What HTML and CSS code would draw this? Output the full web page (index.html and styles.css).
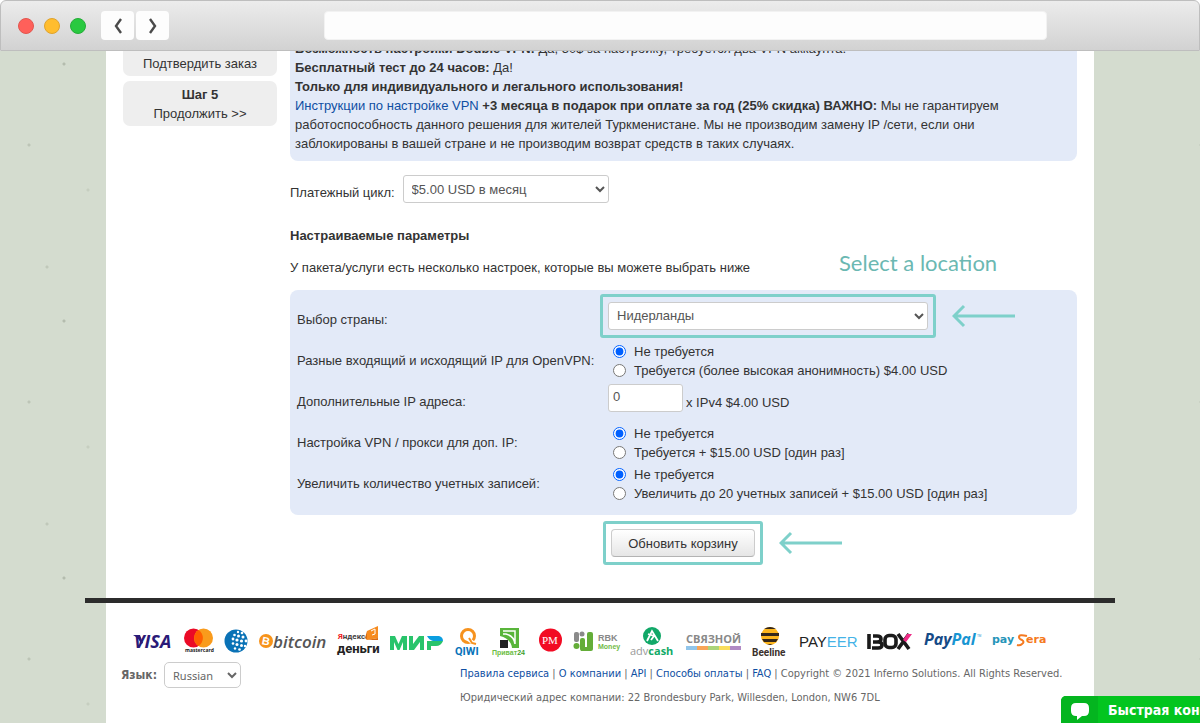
FILE: index.html
```html
<!DOCTYPE html>
<html lang="ru">
<head>
<meta charset="utf-8">
<title>Inferno Solutions</title>
<link rel="stylesheet" href="styles.css">
</head>
<body>
<header class="titlebar">
  <div class="lights"><span class="light red"></span><span class="light yellow"></span><span class="light green"></span></div>
  <div class="nav">
    <button type="button" class="nav-button" aria-label="Back"><svg width="10" height="16" viewBox="0 0 10 16"><path d="M8 1 3 8l5 7" fill="none" stroke="#4a4a4a" stroke-width="2.4"/></svg></button>
    <button type="button" class="nav-button" aria-label="Forward"><svg width="10" height="16" viewBox="0 0 10 16"><path d="m2 1 5 7-5 7" fill="none" stroke="#4a4a4a" stroke-width="2.4"/></svg></button>
  </div>
  <input class="address" type="text" aria-label="Address">
</header>
<div class="viewport">
  <div class="page">
    <div class="columns">
      <aside class="steps">
        <div class="step"><strong>Шаг 4</strong><span>Подтвердить заказ</span></div>
        <div class="step"><strong>Шаг 5</strong><span>Продолжить &gt;&gt;</span></div>
      </aside>
      <main class="main">
        <section class="panel description">
          <b>Возможность настройки Double VPN:</b> Да, 50$ за настройку, требуется два VPN аккаунта.<br>
          <b>Бесплатный тест до 24 часов:</b> Да!<br>
          <b>Только для индивидуального и легального использования!</b><br>
          <a href="#">Инструкции по настройке VPN</a> <b>+3 месяца в подарок при оплате за год (25% скидка) ВАЖНО:</b> Мы не гарантируем<br>
          работоспособность данного решения для жителей Туркменистане. Мы не производим замену IP /сети, если они<br>
          заблокированы в вашей стране и не производим возврат средств в таких случаях.
        </section>
        <div class="cycle">
          <label for="cycle">Платежный цикл:</label>
          <select id="cycle" class="control cycle-select"><option>$5.00 USD в месяц</option></select>
        </div>
        <h2 class="heading">Настраиваемые параметры</h2>
        <div class="intro">
          <p>У пакета/услуги есть несколько настроек, которые вы можете выбрать ниже</p>
          <span class="note">Select a location</span>
        </div>
        <section class="panel options">
          <div class="option">
            <label class="option-name" for="country">Выбор страны:</label>
            <div class="pointed country">
              <span class="frame"><select id="country" class="control country-select"><option>Нидерланды</option></select></span>
              <svg class="arrow" width="63" height="24" viewBox="0 0 63 24"><path d="M63 12H2M12 2 2 12l10 10" fill="none" stroke="#7ed0ca" stroke-width="3"/></svg>
            </div>
          </div>
          <div class="option" role="radiogroup" aria-labelledby="n1">
            <span class="option-name" id="n1">Разные входящий и исходящий IP для OpenVPN:</span>
            <div class="choices">
              <label class="choice"><input type="radio" name="a" checked>Не требуется</label>
              <label class="choice"><input type="radio" name="a">Требуется (более высокая анонимность) $4.00 USD</label>
            </div>
          </div>
          <div class="option">
            <label class="option-name" for="ips">Дополнительные IP адреса:</label>
            <div class="quantity"><input id="ips" class="control quantity-input" type="text" value="0"><span>x IPv4 $4.00 USD</span></div>
          </div>
          <div class="option" role="radiogroup" aria-labelledby="n2">
            <span class="option-name" id="n2">Настройка VPN / прокси для доп. IP:</span>
            <div class="choices">
              <label class="choice"><input type="radio" name="b" checked>Не требуется</label>
              <label class="choice"><input type="radio" name="b">Требуется + $15.00 USD [один раз]</label>
            </div>
          </div>
          <div class="option" role="radiogroup" aria-labelledby="n3">
            <span class="option-name" id="n3">Увеличить количество учетных записей:</span>
            <div class="choices">
              <label class="choice"><input type="radio" name="c" checked>Не требуется</label>
              <label class="choice"><input type="radio" name="c">Увеличить до 20 учетных записей + $15.00 USD [один раз]</label>
            </div>
          </div>
        </section>
        <div class="pointed submit">
          <span class="frame"><button type="submit" class="update">Обновить корзину</button></span>
          <svg class="arrow" width="63" height="24" viewBox="0 0 63 24"><path d="M63 12H2M12 2 2 12l10 10" fill="none" stroke="#7ed0ca" stroke-width="3"/></svg>
        </div>
      </main>
    </div>
    <hr class="rule">
    <footer class="footer">
      <div class="logos">
        <svg width="41" height="36"><path d="M1 11h7l3 8-2 1q-2-6-8-9" fill="#2a1a78"/><text x="2" y="24" font-family="Open Sans" font-weight="bold" font-size="18" font-style="italic" fill="#2a1a78">VISA</text></svg>
        <svg width="29" height="36"><circle cx="9.500" cy="14" r="9.500" fill="#eb0a26"/><circle cx="19.500" cy="14" r="9.500" fill="#f99b1c"/><path d="M14.500 6a9.500 9.500 0 0 1 0 16 9.500 9.500 0 0 1 0-16" fill="#ff5f00"/><text x="1" y="28" font-family="Open Sans" font-size="5" font-weight="bold" fill="#222">mastercard</text></svg>
        <svg width="24" height="36"><circle cx="12" cy="17" r="11.500" fill="#0a72b6"/><g fill="#fff"><circle cx="14" cy="8" r="1.200"/><circle cx="18" cy="9" r="1.300"/><circle cx="10.500" cy="11" r="1.300"/><circle cx="14.500" cy="12" r="1.500"/><circle cx="19" cy="13" r="1.500"/><circle cx="9" cy="15" r="1.400"/><circle cx="13" cy="16" r="1.600"/><circle cx="17.500" cy="17" r="1.600"/><circle cx="22" cy="17" r="1.400"/><circle cx="9" cy="19.500" r="1.300"/><circle cx="13" cy="20.500" r="1.500"/><circle cx="17.500" cy="21.500" r="1.500"/><circle cx="21" cy="22" r="1.200"/><circle cx="11" cy="24.500" r="1.200"/><circle cx="15.500" cy="25.500" r="1.300"/></g></svg>
        <svg width="67" height="36"><circle cx="7" cy="17" r="7" fill="#f7931a"/><text x="3" y="21" font-family="Liberation Sans" font-size="11" font-weight="bold" fill="#fff" transform="rotate(12 7 17)">B</text><text x="14" y="24" font-family="Open Sans" font-size="17" font-weight="600" font-style="italic" fill="#555">bitcoin</text></svg>
        <svg width="42" height="36"><path d="M30 7 41 2v12l-11 2z" fill="#f68b1f"/><path d="M30 7v9l-2-2zM30 16h11v-2z" fill="#d96a10"/><path d="m34 7 4-2v5l-3 1" fill="none" stroke="#fff"/><text x="1" y="15" font-family="Roboto" font-size="8" font-weight="bold" fill="#444"><tspan fill="#f01a1a">Я</tspan>ндекс</text><text x="0" y="29" font-family="Roboto" font-size="13" font-weight="bold" fill="#222">деньги</text></svg>
        <svg width="54" height="36"><g fill="#29c46b"><path d="M0 26V12h5l3.500 8L12 12h5v14h-4v-8l-3.500 8h-2L4 18v8z"/><path d="M19 26V12h4v8l6-8h5v14h-4v-8l-6 8zM37 26V17h16q-2 5-7 5h-5v4z"/></g><path d="M37 12h12q4 1 4 5H43q-4-1-6-5" fill="#0b9ee0"/></svg>
        <svg width="26" height="36"><circle cx="13" cy="12" r="6.500" fill="none" stroke="#f6921e" stroke-width="3"/><path d="m13 15 8 6" stroke="#fff" stroke-width="4"/><path d="m14 14 3 5 4 1" fill="none" stroke="#f6921e" stroke-width="2"/><text x="0" y="31" font-family="Roboto" font-size="11" font-weight="bold" fill="#0873ba">QIWI</text></svg>
        <svg width="36" height="36"><path d="M8 4h19v20h-7q-1-9-12-12z" fill="#59b53b"/><path d="M11 7h12v13q-1-8-9-10h-3" fill="none" stroke="#fff" stroke-width="1.500"/><path d="M8 16h8v8H8z" fill="#222"/><text x="0" y="31" font-family="Liberation Sans" font-size="7" font-weight="bold" fill="#6dbe45">Приват<tspan fill="#3f9f2b">24</tspan></text></svg>
        <svg width="23" height="36"><circle cx="11.500" cy="16" r="11.500" fill="#f20b23"/><text x="3" y="20" font-family="Liberation Serif" font-size="11" fill="#fff">PM</text></svg>
        <svg width="46" height="36"><g fill="#8a8a8a"><rect width="5" height="10" x="1" y="8" rx="2"/><circle cx="9" cy="10" r="2.500"/></g><g fill="#64ad38"><circle cx="3.500" cy="22" r="3"/><rect x="7" y="14" width="5" height="13" rx="2"/><rect x="14" y="8" width="6" height="19" rx="2"/><path d="M8 23h8v4H8z"/></g><g font-family="Liberation Sans" font-weight="bold"><text x="25" y="17" font-size="9" fill="#888">RBK</text><text x="25" y="25" font-size="7" fill="#70ba48">Money</text></g></svg>
        <svg width="45" height="36"><circle cx="22" cy="12" r="9" fill="#11a868"/><path d="m17 17 5-10 6 10M18 10l6 2-3 4" fill="none" stroke="#fff" stroke-width="1.800"/><text x="0" y="31" font-family="Open Sans" font-size="11" fill="#999">adv<tspan font-weight="bold" fill="#12aa67">cash</tspan></text></svg>
        <svg width="55" height="36"><text x="0" y="19" font-family="Open Sans" font-size="11" font-weight="bold" fill="#888">СВЯЗНОЙ</text><path d="M0 22h11v4H0z" fill="#91c5ea"/><path d="M11 22h11v4H11z" fill="#f7a558"/><path d="M22 22h11v4H22z" fill="#aad47a"/><path d="M33 22h11v4H33z" fill="#f9dd5d"/><path d="M44 22h11v4H44z" fill="#b18ac4"/></svg>
        <svg width="36" height="36"><circle cx="18" cy="12" r="9" fill="#fcb51d"/><path d="M12 5q6-4 12 0zM9 9h18v3H9zM10 15h16l-2 3H12zM15 20h6l-3 1z" fill="#33261b"/><text x="0" y="32" font-family="Roboto" font-size="10" font-weight="bold" fill="#3a302b">Beeline</text></svg>
        <svg width="57" height="36"><text x="0" y="23" font-family="Liberation Sans" font-size="15" fill="#222">PAY<tspan fill="#45b3e7">EER</tspan></text></svg>
        <svg width="46" height="36"><g fill="none" stroke="#1a1a1a" stroke-width="3.600"><path d="M2 10v15M6 12h4q4 0 4 3t-4 3H6M9 18h2q4 0 4 3t-4 3H5"/><rect x="18" y="11.500" width="11" height="12" rx="4"/><path d="m31 10 11 15M42 10 31 25"/></g><path d="m36 16 4-6h5l-6 8z" fill="#ee2a86"/></svg>
        <svg width="57" height="36"><text x="0" y="21" font-family="Open Sans" font-size="16" font-weight="bold" font-style="italic" fill="#164b87">Pay<tspan fill="#1895d2">Pal</tspan></text><text x="53" y="13" font-family="Liberation Sans" font-size="3" fill="#1895d2">TM</text></svg>
        <svg width="59" height="36"><g font-family="DejaVu Sans" font-weight="bold" font-size="11"><text x="0" y="19" fill="#2695b9">pay</text><text x="34" y="19" fill="#f57920">era</text></g><path d="M35 12q-8-2-8 1 0 2 3 3 3 2 0 4-2 2-5 1" fill="none" stroke="#f57920" stroke-width="2"/></svg>
      </div>
      <div class="footer-row">
        <div class="language">
          <label for="lang">Язык:</label>
          <select id="lang" class="language-select"><option>Russian</option></select>
        </div>
        <div class="legal">
          <p><a href="#">Правила сервиса</a> | <a href="#">О компании</a> | <a href="#">API</a> | <a href="#">Способы оплаты</a> | <a href="#">FAQ</a> | Copyright © 2021 Inferno Solutions. All Rights Reserved.</p>
          <p>Юридический адрес компании: 22 Brondesbury Park, Willesden, London, NW6 7DL</p>
        </div>
      </div>
    </footer>
  </div>
  <button type="button" class="chat">
    <span class="chat-icon"><svg width="18" height="17" viewBox="0 0 18 17"><path d="M5 0h8q5 0 5 5v3q0 5-5 5h-2l-5 4v-4H5Q0 13 0 8V5q0-5 5-5" fill="#fff"/></svg></span>
    <span class="chat-text">Быстрая консультация</span>
  </button>
</div>
</body>
</html>
```
FILE: styles.css
```css
* { box-sizing: border-box; }

body {
  margin: 0;
  height: 100vh;
  display: flex;
  flex-direction: column;
  overflow: hidden;
  background: #fff;
  color: #333;
  font: 13px/19px "Liberation Sans", Arial, sans-serif;
}

p, h2 { margin: 0; }
a { color: #0f4fa3; text-decoration: none; }

/* Browser frame */
.titlebar {
  flex: none;
  display: flex;
  align-items: center;
  height: 51px;
  padding: 0 17px;
  border: 1px solid #bebebe;
  border-radius: 6px 6px 0 0;
  background: linear-gradient(#ececec, #d2d2d2);
}
.lights { display: flex; gap: 10px; }
.light { width: 16px; height: 16px; border-radius: 50%; border: 1px solid; }
.red { background: #ff605a; border-color: #e2564f; }
.yellow { background: #ffbd2e; border-color: #dfa32d; }
.green { background: #29c940; border-color: #25ad38; }
.nav { display: flex; gap: 2px; margin-left: 15px; }
.nav-button {
  display: grid;
  place-items: center;
  width: 33px;
  height: 29px;
  padding: 0;
  border: 0;
  border-radius: 4px;
  background: #fdfdfd;
}
.address {
  flex: 1;
  height: 29px;
  margin: 0 135px 0 155px;
  border: 1px solid #f2f2f2;
  border-radius: 4px;
  background: #fdfdfd;
}

/* Page */
.viewport {
  position: relative;
  flex: 1;
  min-height: 0;
  overflow: hidden;
  background-color: #d4dccf;
  background-image:
    radial-gradient(circle at 64px 13px, #b4bcae 1px, transparent 2px),
    radial-gradient(circle at 29px 94px, #bdc5b7 1px, transparent 2px),
    radial-gradient(circle at 88px 139px, #c6cec0 1px, transparent 2px),
    radial-gradient(circle at 47px 216px, #c0c8ba 1px, transparent 2px);
  background-size: 293px 257px;
}
.page {
  display: flow-root;
  max-width: 988px;
  min-height: 100%;
  margin: 0 auto;
  background: #fff;
}
.columns {
  display: flex;
  gap: 13px;
  padding: 0 17px;
  margin-top: -20px;
}
.steps { flex: 0 0 154px; }
.step {
  display: flex;
  flex-direction: column;
  height: 45px;
  padding: 4px 0;
  margin-bottom: 5px;
  border-radius: 7px;
  background: #eee;
  text-align: center;
}
.main { flex: 1; min-width: 0; }
.panel { border-radius: 8px; background: #e3eaf8; }
.description { padding: 8px 5px 8px; }
.cycle { display: flex; align-items: center; gap: 8px; margin-top: 14px; }
.cycle label { padding-top: 6px; }
.control {
  height: 28px;
  border: 1px solid #ccc;
  border-radius: 3px;
  background: #fff;
  color: #555;
  font: inherit;
}
.cycle-select { width: 206px; padding: 0 4px; }
.heading { margin-top: 23px; font-size: 13px; line-height: 19px; }
.intro { position: relative; margin-top: 13px; }
.note {
  position: absolute;
  top: -9px;
  left: 549px;
  color: #6bb8b2;
  font: 22px/28px Lato, sans-serif;
}
.options { margin-top: 13px; padding: 9px 7px 11px; }
.option {
  display: grid;
  grid-template-columns: 311px 1fr;
  align-items: center;
  height: 41px;
  white-space: nowrap;
}
.pointed { display: flex; align-items: center; gap: 16px; }
.frame {
  display: flex;
  margin: -8px 0 -8px -8px;
  padding: 5px;
  border: 3px solid #7ed0ca;
  border-radius: 3px;
}
.country { margin-bottom: 8px; }
.country-select { width: 320px; padding: 0 4px; }
.arrow { flex: none; }
.choice { display: flex; align-items: center; gap: 8px; margin-left: 5px; }
.choice input { width: 13px; height: 13px; margin: 1px 0 0; accent-color: #0060ff; }
.quantity { display: flex; align-items: flex-end; gap: 3px; margin-bottom: 8px; }
.quantity-input { width: 75px; padding: 0 4px 2px; }
.submit { margin: 14px 0 0 321px; }
.update {
  width: 144px;
  height: 28px;
  padding: 0;
  border: 1px solid #ccc;
  border-bottom-color: #b3b3b3;
  border-radius: 4px;
  background: linear-gradient(#fff, #e6e6e6);
  color: #333;
  font: inherit;
}
.rule {
  position: relative;
  height: 5px;
  margin: 41px -21px 0;
  border: 0;
  background: #2c2c2c;
}

/* Footer */
.footer {
  padding: 21px 15px 0;
  color: #666;
  font: 11px/24px "DejaVu Sans Condensed", Tahoma, sans-serif;
}
.logos { display: flex; gap: 11px; padding-left: 11px; }
.logos svg { flex: none; display: block; overflow: visible; }
.footer-row { display: flex; margin-top: 2px; }
.language {
  flex: 0 0 339px;
  display: flex;
  align-items: center;
  gap: 7px;
  height: 26px;
  font-size: 12px;
  font-weight: bold;
}
.language-select {
  width: 77px;
  height: 26px;
  padding: 0 4px;
  border: 1px solid #ccc;
  border-radius: 5px;
  background: #fff;
  color: #666;
  font: 11px/24px "Noto Sans", sans-serif;
}
.legal { white-space: nowrap; }

/* Chat */
.chat {
  position: absolute;
  right: 0;
  bottom: 0;
  display: flex;
  width: 139px;
  height: 27px;
  padding: 0;
  border: 0;
  border-radius: 5px 0 0 0;
  overflow: hidden;
  background: #03c51f;
  color: #fff;
  font: bold 14px/29px "DejaVu Sans Condensed", Tahoma, sans-serif;
  white-space: nowrap;
}
.chat-icon { flex: 0 0 37px; display: grid; place-items: center; height: 100%; padding-top: 4px; background: #04b51f; }
.chat-text { padding-left: 10px; }
```
